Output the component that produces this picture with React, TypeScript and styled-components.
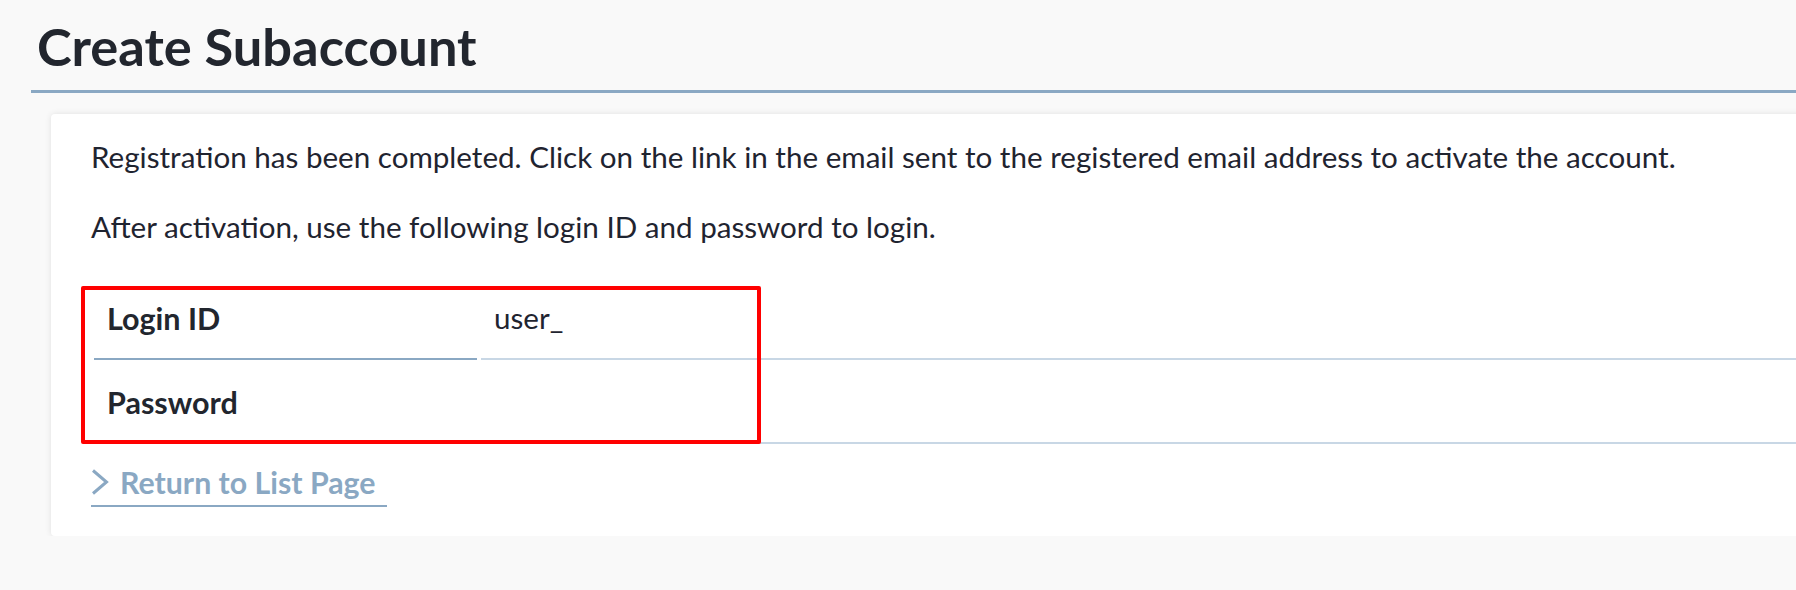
import React, { FunctionComponent } from "react"
import styled, { createGlobalStyle } from "styled-components"

const GlobalStyle = createGlobalStyle`
  html, body {
    margin: 0;
    padding: 0;
    background: #f9f9f9;
    overflow: hidden;
  }
  body {
    font-family: Lato, "Noto Sans", sans-serif;
    color: #1f2430;
  }
`

interface Credential {
  label: string
  value: string
}

const credentials: Credential[] = [
  { label: "Login ID", value: "user_" },
  { label: "Password", value: "" },
]

const ChevronIcon: FunctionComponent = () => (
  <svg width="18" height="26" viewBox="0 0 18 26" fill="none">
    <polyline
      points="2,1.5 15.5,13 2,24.5"
      stroke="currentColor"
      strokeWidth="3"
      strokeLinejoin="miter"
    />
  </svg>
)

const App: FunctionComponent = () => {
  return (
    <>
      <GlobalStyle />
      <Page>
        <PageHeader>
          <Title>Create Subaccount</Title>
        </PageHeader>
        <Card>
          <Message>
            Registration has been completed. Click on the link in the email
            sent to the registered email address to activate the account.
          </Message>
          <Message>
            After activation, use the following login ID and password to
            login.
          </Message>

          <TableWrap>
            <CredentialTable>
              <tbody>
                {credentials.map((item) => (
                  <tr key={item.label}>
                    <LabelCell>{item.label}</LabelCell>
                    <ValueCell>{item.value}</ValueCell>
                  </tr>
                ))}
              </tbody>
            </CredentialTable>
            <Highlight />
          </TableWrap>

          <ReturnLink href="#">
            <ChevronIcon />
            Return to List Page
          </ReturnLink>
        </Card>
      </Page>
    </>
  )
}

export default App

const Page = styled.div`
  margin-left: 31px;
  width: calc(100vw + 40px);
`

const PageHeader = styled.header`
  padding: 15px 6px 13px;
  border-bottom: 3px solid #8aa8c3;
`

const Title = styled.h1`
  margin: 0;
  font-size: 52.4px;
  line-height: 62px;
  font-weight: 700;
  color: #22262e;
`

const Card = styled.section`
  margin: 21px 0 0 20px;
  padding: 22px 40px 29px 40px;
  background: #ffffff;
  border-radius: 4px;
  box-shadow: 0 0 6px rgba(0, 0, 0, 0.1);
`

const Message = styled.p`
  margin: 0 0 28px;
  font-size: 29.6px;
  line-height: 42px;
  color: #1f2430;
`

const TableWrap = styled.div`
  position: relative;
  margin-top: 26px;
`

const CredentialTable = styled.table`
  width: 100%;
  border-collapse: separate;
  border-spacing: 4px 0;
  margin-left: -1px;
`

const LabelCell = styled.th`
  width: 357px;
  padding: 21px 13px 19px;
  text-align: left;
  font-size: 30.5px;
  line-height: 42px;
  font-weight: 700;
  color: #22262e;
  border-bottom: 2px solid #8aa8c3;
`

const ValueCell = styled.td`
  padding: 21px 13px 19px;
  font-size: 29.6px;
  line-height: 42px;
  font-weight: 400;
  color: #1f2430;
  border-bottom: 2px solid #c8d7e5;
`

const Highlight = styled.div`
  position: absolute;
  left: -10px;
  top: 10px;
  width: 680px;
  height: 158px;
  box-sizing: border-box;
  border: 4px solid #ff0000;
  border-radius: 2px;
  pointer-events: none;
`

const ReturnLink = styled.a`
  display: inline-flex;
  align-items: center;
  gap: 11px;
  margin-top: 21px;
  padding: 0 12px 6px 0;
  font-size: 30.3px;
  line-height: 34px;
  font-weight: 700;
  color: #8aa8c3;
  text-decoration: none;
  border-bottom: 2px solid #8aa8c3;
`
